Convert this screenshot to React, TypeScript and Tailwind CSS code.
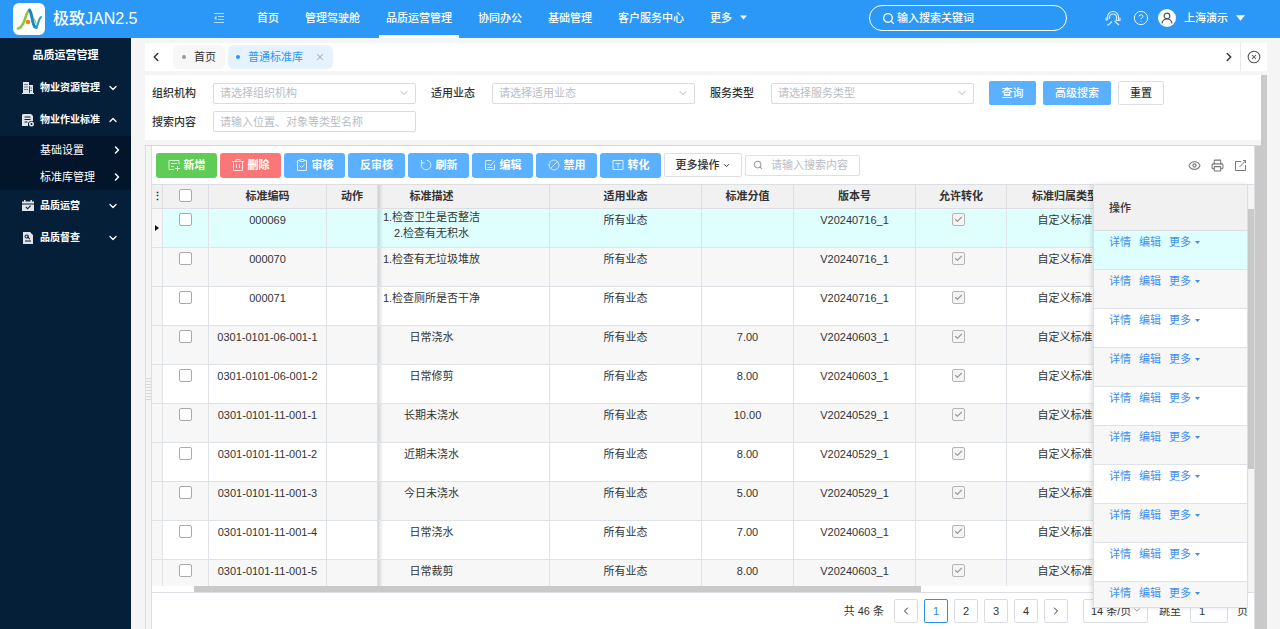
import type { ReactNode } from "react"
import {
  Ban,
  Check,
  ChevronDown,
  ChevronLeft,
  ChevronRight,
  ChevronUp,
  CircleHelp,
  CircleX,
  Eye,
  Printer,
  Search,
  X,
} from "lucide-react"

interface StandardRow {
  code: string
  desc: string[]
  score: string
  version: string
}

const navItems = ["首页", "管理驾驶舱", "品质运营管理", "协同办公", "基础管理", "客户服务中心"]

const rows: StandardRow[] = [
  { code: "000069", desc: ["1.检查卫生是否整洁", "2.检查有无积水"], score: "", version: "V20240716_1" },
  { code: "000070", desc: ["1.检查有无垃圾堆放"], score: "", version: "V20240716_1" },
  { code: "000071", desc: ["1.检查厕所是否干净"], score: "", version: "V20240716_1" },
  { code: "0301-0101-06-001-1", desc: ["日常浇水"], score: "7.00", version: "V20240603_1" },
  { code: "0301-0101-06-001-2", desc: ["日常修剪"], score: "8.00", version: "V20240603_1" },
  { code: "0301-0101-11-001-1", desc: ["长期未浇水"], score: "10.00", version: "V20240529_1" },
  { code: "0301-0101-11-001-2", desc: ["近期未浇水"], score: "8.00", version: "V20240529_1" },
  { code: "0301-0101-11-001-3", desc: ["今日未浇水"], score: "5.00", version: "V20240529_1" },
  { code: "0301-0101-11-001-4", desc: ["日常浇水"], score: "7.00", version: "V20240603_1" },
  { code: "0301-0101-11-001-5", desc: ["日常裁剪"], score: "8.00", version: "V20240603_1" },
]

function rowBackground(index: number) {
  if (index === 0) return "bg-[#dfffff]"
  return index % 2 === 1 ? "bg-[#f7f7f7]" : "bg-white"
}

function Logo() {
  return (
    <span className="flex size-8 items-center justify-center rounded-md bg-white">
      <svg viewBox="0 0 32 32" className="size-8" fill="none" strokeLinecap="round" strokeLinejoin="round">
        <path d="M5 25.500c3.500-.5 5.500-5 7-9.500 1.200-4 2-7.500 4.500-9" stroke="#8cc63f" strokeWidth="2.600" />
        <path d="M16.500 7c2 3 2.500 8 3.500 12.500.7 3 1.800 5 3.200 5" stroke="#1487c4" strokeWidth="3" />
        <path d="M23.200 24.500c2-2 2-8.500 4.800-10.500" stroke="#1fa0c8" strokeWidth="2" />
        <path d="M21 15.500c1 1 1.500 3 2 5" stroke="#a5cf4c" strokeWidth="1.200" />
        <circle cx="15" cy="19" r="2.300" fill="#f58220" />
      </svg>
    </span>
  )
}

function Caret({ className }: { className: string }) {
  return (
    <svg viewBox="0 0 10 6" className={className} fill="currentColor" aria-hidden="true">
      <path d="M0 0h10L5 6z" />
    </svg>
  )
}

// 12px outline glyph used on the toolbar buttons
function ToolIcon({ d }: { d: string }) {
  return (
    <svg viewBox="0 0 12 12" className="size-3 opacity-80" fill="none" stroke="currentColor" aria-hidden="true">
      <path d={d} />
    </svg>
  )
}

function Header() {
  return (
    <header className="flex h-[38px] items-center bg-[#2b98f7] pr-[35px] text-white">
      <div className="flex w-[212px] shrink-0 items-center gap-2 pl-[13px]">
        <Logo />
        <h1 className="text-base leading-none font-medium whitespace-nowrap">极致JAN2.5</h1>
      </div>
      <button type="button" aria-label="收起菜单" className="shrink-0 pb-0.5">
        <svg viewBox="0 0 14 14" className="size-[14px]" fill="none" stroke="#b8dcfc">
          <path d="M2 2.500h10M6 5.500h6M6 8.500h6M2 11.500h10" />
          <path d="M4.500 4.500v5L2 7z" fill="#b8dcfc" stroke="none" />
        </svg>
      </button>
      <nav className="ml-6 flex h-full shrink-0 items-center gap-3 font-medium">
        {navItems.map((item) => (
          <a
            key={item}
            href="#"
            className={
              item === "品质运营管理"
                ? "flex h-full items-center border-b-[3px] border-b-white px-[7px]"
                : "flex h-full items-center px-[7px] pb-[3px]"
            }
          >
            {item}
          </a>
        ))}
        <button type="button" className="flex h-full items-center gap-2 px-[7px] pb-[3px]">
          更多
          <Caret className="h-[5px] w-[7px]" />
        </button>
      </nav>
      <div className="ml-auto flex shrink-0 items-center pb-0.5">
        <label className="flex h-[26px] w-[198px] items-center gap-0.5 rounded-full border border-white pl-3">
          <Search className="size-[13px]" strokeWidth={2.5} />
          <input
            type="search"
            aria-label="全局搜索"
            placeholder="输入搜索关键词"
            className="w-40 bg-transparent font-medium outline-none placeholder:text-white"
          />
        </label>
        <button type="button" aria-label="客服" className="ml-[38px]">
          <svg viewBox="0 0 16 16" className="size-4" fill="none" stroke="currentColor" strokeWidth="1.200" opacity="0.800">
            <path d="M2.500 10V7a5.500 5.500 0 0 1 11 0v3.500H11" />
            <path d="M4.500 9V7.500a3.500 3.500 0 0 1 7 0V9c0 1-.6 2-1.500 2.500l4 3.500M1 7.500v2.500h1.500M15 7.500v3h-1.500M2 15h1.500L7 11.500" />
          </svg>
        </button>
        <button type="button" aria-label="帮助" className="ml-3">
          <CircleHelp className="size-4 opacity-90" strokeWidth={1.5} />
        </button>
        <button type="button" className="ml-[9px] flex items-center font-medium">
          <svg viewBox="0 0 18 18" className="mr-2 size-[18px]" aria-hidden="true">
            <circle cx="9" cy="9" r="9" fill="#fff" />
            <g fill="none" stroke="#555" strokeWidth="1.200">
              <circle cx="9" cy="7" r="2.800" />
              <path d="M4 14.500c.4-3 2.500-4.500 5-4.500s4.600 1.500 5 4.500" />
            </g>
          </svg>
          上海演示
          <Caret className="ml-2 h-[6px] w-[9px]" />
        </button>
      </div>
    </header>
  )
}

function MenuGroup({ label, icon, open = false }: { label: string; icon: ReactNode; open?: boolean }) {
  const Chevron = open ? ChevronUp : ChevronDown
  return (
    <button type="button" aria-expanded={open} className="flex h-8 w-full items-center pr-3 pl-[22px] text-[10px] font-bold">
      {icon}
      <span className="ml-1.5">{label}</span>
      <Chevron className="ml-auto size-3" strokeWidth={2.5} />
    </button>
  )
}

function SubMenuItem({ label }: { label: string }) {
  return (
    <a href="#" className="flex h-[27px] items-center pr-2 pl-10">
      {label}
      <ChevronRight className="ml-auto size-3" strokeWidth={3} />
    </a>
  )
}

function Sidebar() {
  return (
    <aside className="w-[131px] shrink-0 bg-[#051f38] text-white">
      <h2 className="flex h-[34px] items-center justify-center font-bold">品质运营管理</h2>
      <MenuGroup
        label="物业资源管理"
        icon={
          <svg viewBox="0 0 12 12" className="size-3" fill="#dfe5ea">
            <path fillRule="evenodd" d="M1 0h6v3h4v8h1v1H0v-1h1zM2.500 2v1h1V2zm2 0v1h1V2zm-2 2.500v1h1v-1zm2 0v1h1v-1zM2.500 7v1h1V7zm2 0v1h1V7zM7 4v7h.8V4zm1.600 1.500v1h1v-1zm0 2.500v1h1V8z" />
          </svg>
        }
      />
      <MenuGroup
        label="物业作业标准"
        open
        icon={
          <svg viewBox="0 0 12 13" className="h-[13px] w-3" fill="#dfe5ea">
            <path fillRule="evenodd" d="M1 0h8l2 2v5H8L6 9v3H0V1zM2.500 2.500v1h6v-1zm0 2.500v1h6V5zm0 2.500v1h3v-1z" />
            <path fillRule="evenodd" d="M9.500 7.500a2.500 2.500 0 1 1 0 5 2.500 2.500 0 0 1 0-5zm0 1.500a1 1 0 1 0 0 2 1 1 0 0 0 0-2z" />
          </svg>
        }
      />
      <div className="bg-[#02152a]">
        <SubMenuItem label="基础设置" />
        <SubMenuItem label="标准库管理" />
      </div>
      <MenuGroup
        label="品质运营"
        icon={
          <svg viewBox="0 0 12 12" className="size-3" fill="#dfe5ea">
            <path d="M0 1.500h2V0h1.500v1.500h5V0H10v1.500h2v2H0z" />
            <path fillRule="evenodd" d="M0 4.500h12V11H0zm3.500 2.800L5.600 9.500 9 6l-.8-.8-2.600 2.700-1.300-1.300z" />
          </svg>
        }
      />
      <MenuGroup
        label="品质督查"
        icon={
          <svg viewBox="0 0 12 12" className="size-3" fill="#dfe5ea">
            <path fillRule="evenodd" d="M1 0h7l3 3v9H1zm3.500 2.500a2 2 0 1 0 1.500 3.400L7.500 7.500l.7-.7-1.500-1.500a2 2 0 0 0-2.200-2.800zm0 1a1 1 0 1 1 0 2 1 1 0 0 1 0-2zM3 8.500v1h6v-1z" />
          </svg>
        }
      />
    </aside>
  )
}

function TabBar() {
  return (
    <div className="flex h-7 items-center bg-white text-[#333]">
      <button type="button" aria-label="向左" className="flex w-7 pl-1">
        <ChevronLeft className="size-[14px]" strokeWidth={2.5} />
      </button>
      <button type="button" className="flex h-6 items-center gap-2 rounded-md bg-[#f7f7f7] px-[9px]">
        <span className="size-1 rounded-full bg-[#999]" />
        首页
      </button>
      <div className="ml-[3px] flex h-6 items-center rounded-md bg-[#e6f3ff] px-2 text-[#2b98f7]">
        <button type="button" className="flex items-center gap-2">
          <span className="size-1 rounded-full bg-[#2b98f7]" />
          普通标准库
        </button>
        <button type="button" aria-label="关闭标签" className="ml-3 text-[#aaa]">
          <X className="size-[10px]" strokeWidth={2.5} />
        </button>
      </div>
      <button type="button" aria-label="向右" className="ml-auto px-1">
        <ChevronRight className="size-[14px]" strokeWidth={2.5} />
      </button>
      <button type="button" aria-label="关闭全部" className="flex h-full w-[27px] items-center justify-center border-l border-[#e8e8e8] text-[#555]">
        <CircleX className="size-[14px]" strokeWidth={1.8} />
      </button>
    </div>
  )
}

function FilterSelect({ id, label }: { id: string; label: string }) {
  return (
    <div className="flex items-center">
      <label htmlFor={id} className="w-[61px] font-medium">
        {label}
      </label>
      <div className="relative w-[203px]">
        <select id={id} className="block h-[21px] w-full appearance-none rounded-xs border border-[#d9dce2] bg-white pl-1.5 text-[#b8bcc5]">
          <option>请选择{label}</option>
        </select>
        <ChevronDown className="pointer-events-none absolute top-1 right-1.5 size-3 text-[#b0b4bd]" />
      </div>
    </div>
  )
}

function FilterPanel() {
  return (
    <form className="flex flex-col gap-1 bg-white pt-[6px] pb-2 pl-[7px]">
      <div className="flex items-center gap-[15px]">
        <FilterSelect id="org" label="组织机构" />
        <FilterSelect id="business" label="适用业态" />
        <FilterSelect id="service" label="服务类型" />
        <div className="flex gap-[7px]">
          <button type="button" className="h-6 w-[47px] rounded-xs bg-[#5bb0ff] font-medium text-white">
            查询
          </button>
          <button type="button" className="h-6 w-[68px] rounded-xs bg-[#5bb0ff] font-medium text-white">
            高级搜索
          </button>
          <button type="reset" className="h-6 w-[46px] rounded-xs border border-[#dcdfe6] bg-white font-medium">
            重置
          </button>
        </div>
      </div>
      <div className="flex items-center pt-0.5">
        <label htmlFor="content" className="w-[61px] font-medium">
          搜索内容
        </label>
        <input
          id="content"
          placeholder="请输入位置、对象等类型名称"
          className="h-[21px] w-[203px] rounded-xs border border-[#d9dce2] px-1.5 outline-none placeholder:text-[#b8bcc5]"
        />
      </div>
    </form>
  )
}

function ToolButton({ label, icon, className }: { label: string; icon?: ReactNode; className?: string }) {
  return (
    <button
      type="button"
      className={`flex h-[25px] items-center justify-center gap-1 rounded-[3px] font-bold text-white ${icon ? "w-[61px]" : "w-[57px]"} ${className ?? "bg-[#5bb0ff]"}`}
    >
      {icon}
      {label}
    </button>
  )
}

function Toolbar() {
  return (
    <div className="flex h-[38px] items-center gap-[3px] pl-1">
      <ToolButton label="新增" className="bg-[#5fcc57]" icon={<ToolIcon d="M11 5.500v-4H1v9h5M3 4.500h6M3 7.500h3M9.500 7v5M7 9.500h5" />} />
      <ToolButton label="删除" className="bg-[#fb7676]" icon={<ToolIcon d="M0 2.500h12M4 2.500v-2h4v2M1.500 2.500v9h9v-9M4.500 5v4M7.500 5v4" />} />
      <ToolButton label="审核" icon={<ToolIcon d="M4 1.500H1.500v10h9v-10H8M4 .5h4v2H4zM3.500 6.500L5.500 8.500 8.500 5.500" />} />
      <ToolButton label="反审核" />
      <ToolButton label="刷新" icon={<ToolIcon d="M2 3.500a4.800 4.800 0 1 0 5-2.200M1.500 1v3h3" />} />
      <ToolButton label="编辑" icon={<ToolIcon d="M7.500 1.500h-6v9h9v-5M3.500 5.500h2M3.500 8.500h5M6 7l5-5.500" />} />
      <ToolButton label="禁用" icon={<Ban className="size-3 -scale-x-100 opacity-80" strokeWidth={1.8} />} />
      <ToolButton label="转化" icon={<ToolIcon d="M1 1.500h10v9H1zM3.500 4.500h5M6 4.500v4" />} />
      <button type="button" className="flex h-6 w-[78px] items-center justify-center gap-0.5 rounded-xs border border-[#dcdfe6] bg-white font-medium">
        更多操作
        <ChevronDown className="size-[9px]" strokeWidth={2.5} />
      </button>
      <label className="flex h-[21px] w-[115px] items-center gap-2 rounded-xs border border-[#dcdfe6] pl-[7px]">
        <Search className="size-[10px] shrink-0 text-[#999]" strokeWidth={2.5} />
        <input aria-label="搜索表格" placeholder="请输入搜索内容" className="w-full min-w-0 outline-none placeholder:text-[#b8bcc5]" />
      </label>
      <div className="ml-auto flex items-center gap-2.5 pr-[7px] text-[#777]">
        <button type="button" aria-label="显示列">
          <Eye className="size-[13px]" />
        </button>
        <button type="button" aria-label="打印">
          <Printer className="size-[13px]" />
        </button>
        <button type="button" aria-label="导出">
          <svg viewBox="0 0 13 13" className="size-[13px]" fill="none" stroke="currentColor">
            <path d="M7 2.500H1.500v9h10V6M5.500 8l6-6M9 1.500h2.500V4" />
          </svg>
        </button>
      </div>
    </div>
  )
}

function StandardsTable() {
  const head = "border-r border-b border-[#dcdee3] p-0 pb-0.5 font-bold"
  const cell = "border-r border-b border-[#dfe2e7] p-0 pt-[3px] align-top leading-4 whitespace-nowrap"
  // shadow of the frozen columns, cast on the first scrolling one
  const frozenEdge = "bg-[linear-gradient(90deg,rgba(60,70,90,0.2)_0px,transparent_5px)]"
  return (
    <table className="w-full table-fixed border-separate border-spacing-0 text-center">
      <colgroup>
        <col className="w-[11px]" />
        <col className="w-[46px]" />
        <col className="w-[118px]" />
        <col className="w-[51px]" />
        <col className="w-[172px]" />
        <col className="w-[152px]" />
        <col className="w-[92px]" />
        <col className="w-[122px]" />
        <col className="w-[91px]" />
        <col className="w-[117px]" />
        <col />
      </colgroup>
      <thead className="bg-[#f1f1f1]">
        <tr className="h-6">
          <th className={head}>⋮</th>
          <th className={head}>
            <input type="checkbox" aria-label="全选" className="mx-auto block size-[13px] appearance-none rounded-xs border border-[#aaa] bg-white" />
          </th>
          <th className={head}>标准编码</th>
          <th className={head}>动作</th>
          <th className={`${head} ${frozenEdge} pr-16`}>标准描述</th>
          <th className={head}>适用业态</th>
          <th className={head}>标准分值</th>
          <th className={head}>版本号</th>
          <th className={head}>允许转化</th>
          <th className={head}>标准归属类型</th>
          <th className={head} aria-hidden="true" />
        </tr>
      </thead>
      <tbody>
        {rows.map((row, index) => (
          <tr key={row.code} className={`h-[39px] ${rowBackground(index)}`}>
            <td className="border-r border-b border-[#dfe2e7] bg-[#f7f7f7] p-0">
              {index === 0 && (
                <svg viewBox="0 0 4 6" className="mx-auto h-1.5 w-1" fill="#111">
                  <path d="M0 0l4 3-4 3z" />
                </svg>
              )}
            </td>
            <td className="border-r border-b border-[#dfe2e7] p-0 pt-1 align-top">
              <input
                type="checkbox"
                aria-label={`选择 ${row.code}`}
                className="mx-auto block size-[13px] appearance-none rounded-xs border border-[#aaa] bg-white"
              />
            </td>
            <td className={cell}>{row.code}</td>
            <td className={cell} />
            <td className={`border-r border-b border-[#dfe2e7] p-0 pr-16 align-top leading-4 whitespace-nowrap ${frozenEdge} ${row.desc.length > 1 ? "" : "pt-[3px]"}`}>
              {row.desc.map((line) => (
                <div key={line}>{line}</div>
              ))}
            </td>
            <td className={cell}>所有业态</td>
            <td className={cell}>{row.score}</td>
            <td className={cell}>{row.version}</td>
            <td className="border-r border-b border-[#dfe2e7] p-0 pt-1 pr-1.5 align-top">
              <span className="grid place-items-center">
                <input
                  type="checkbox"
                  checked
                  disabled
                  aria-label="允许转化"
                  className="col-start-1 row-start-1 size-[13px] appearance-none rounded-xs border border-[#b5b5b5] bg-[#f4f4f4]"
                />
                <Check className="col-start-1 row-start-1 size-[9px] text-[#999]" strokeWidth={3} />
              </span>
            </td>
            <td className={cell}>自定义标准</td>
            <td className={cell} />
          </tr>
        ))}
      </tbody>
    </table>
  )
}

// Pinned action column, floats over the scrolling table and the footer line
function PinnedActions() {
  return (
    <div className="absolute -top-px right-[6px] z-10 h-[424px] w-[155px] overflow-hidden border border-[#dcdee3] shadow-[-2px_0_4px_rgba(60,70,90,0.15)]">
      <table className="w-full border-separate border-spacing-0 text-left">
        <thead className="bg-[#f1f1f1]">
          <tr className="h-[46px]">
            <th className="border-b border-[#dcdee3] p-0 pl-[15px] font-medium">操作</th>
          </tr>
        </thead>
        <tbody>
          {rows.map((row, index) => (
            <tr key={row.code} className={`h-[39px] ${rowBackground(index)}`}>
              <td className="border-b border-[#dfe2e7] p-0 pt-[3px] pl-[15px] align-top leading-4 text-[#3c8ff2]">
                <div className="flex gap-2">
                  <a href="#">详情</a>
                  <a href="#">编辑</a>
                  <button type="button" className="flex items-center gap-1">
                    更多
                    <Caret className="h-[3px] w-[5px]" />
                  </button>
                </div>
              </td>
            </tr>
          ))}
        </tbody>
      </table>
    </div>
  )
}

function Pagination() {
  const box = "flex size-6 items-center justify-center rounded-xs border border-[#d9dce2] bg-white"
  return (
    <nav aria-label="分页" className="flex items-center justify-end pt-[6px] pr-[6px]">
      <span className="mr-[10px]">共 46 条</span>
      <div className="flex gap-1.5 font-medium">
        <button type="button" aria-label="上一页" className={box}>
          <ChevronLeft className="size-3" />
        </button>
        <button type="button" aria-current="page" className="flex size-6 items-center justify-center rounded-xs border border-[#2b8cf7] bg-white text-[#2b8cf7]">
          1
        </button>
        <button type="button" className={box}>2</button>
        <button type="button" className={box}>3</button>
        <button type="button" className={box}>4</button>
        <button type="button" aria-label="下一页" className={box}>
          <ChevronRight className="size-3" />
        </button>
      </div>
      <div className="relative ml-[15px]">
        <select aria-label="每页条数" className="block h-6 w-[65px] appearance-none rounded-xs border border-[#d9dce2] bg-white pl-[7px]">
          <option>14 条/页</option>
        </select>
        <ChevronDown className="pointer-events-none absolute top-[6px] right-1.5 size-[10px] text-[#888]" />
      </div>
      <label className="ml-[11px] flex items-center gap-[9px]">
        跳至
        <input defaultValue="1" className="h-6 w-[38px] rounded-xs border border-[#d9dce2] px-2 outline-none" />
        页
      </label>
    </nav>
  )
}

function DataPanel() {
  return (
    <section className="mt-[5px] flex flex-1 border-t border-[#d5d7db]">
      <div className="flex w-[7px] shrink-0 items-center border-x border-[#dcdee3]">
        <div className="h-6 w-full bg-[repeating-linear-gradient(0deg,#d5d7db_0px,#d5d7db_1px,transparent_1px,transparent_3px)]" />
      </div>
      <div className="min-w-0 flex-1 bg-white">
        <Toolbar />
        <div className="relative flex border-t border-b border-[#dcdee3]">
          <div className="min-w-0 flex-1">
            <div className="h-[401px] overflow-hidden">
              <StandardsTable />
            </div>
            <div className="h-[6px] pl-[42px]">
              <div className="h-full w-[69%] bg-[#c9c9c9]" />
            </div>
          </div>
          <div className="w-[6px] shrink-0 bg-[#f5f5f5] pt-6">
            <div className="h-[260px] bg-[#c9c9c9]" />
          </div>
          <PinnedActions />
        </div>
        <Pagination />
      </div>
      <div className="w-[7px] shrink-0 border-l border-[#dcdee3] bg-[#c9c9c9]" />
    </section>
  )
}

export default function App() {
  return (
    <div className="flex min-h-screen flex-col bg-[#f5f5f5] font-['Liberation_Sans','Noto_Sans_CJK_SC',sans-serif] text-[11px] leading-4 text-[#333]">
      <Header />
      <div className="flex flex-1">
        <Sidebar />
        <main className="flex min-w-0 flex-1 flex-col gap-1 pt-[5px] pr-[13px] pl-[14px]">
          <TabBar />
          <div className="flex flex-1">
            <div className="flex min-w-0 flex-1 flex-col">
              <FilterPanel />
              <DataPanel />
            </div>
            <div className="w-[6px] shrink-0 bg-[#c9c9c9]" />
          </div>
        </main>
      </div>
    </div>
  )
}
